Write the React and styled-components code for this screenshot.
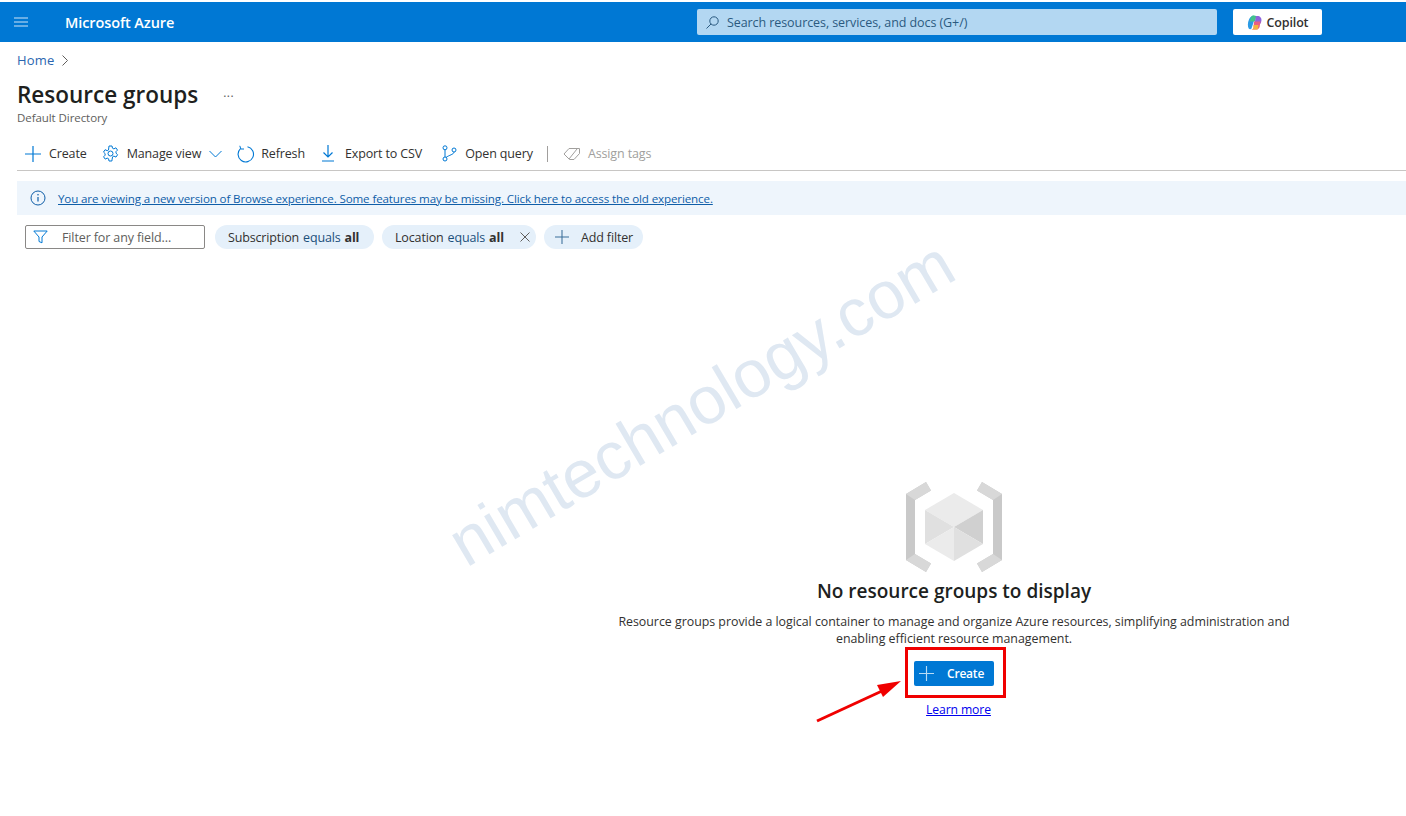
import styled, { createGlobalStyle } from "styled-components";

const GlobalStyle = createGlobalStyle`
  html, body { margin: 0; padding: 0; background: #fff; }
  body { font-family: "Open Sans", "Noto Sans", sans-serif; color: #323130; font-size: 12px; overflow: hidden; }
`;

const Page = styled.div`
  position: relative;
  width: 1406px;
  height: 816px;
  overflow: hidden;
  padding-top: 2px;
  box-sizing: border-box;
`;

const TopBar = styled.header`
  display: flex;
  align-items: center;
  height: 40px;
  background: #0078d4;
  color: #fff;
`;

const MenuButton = styled.div`
  display: flex;
  width: 14px;
  margin-left: 14px;
  color: #cfe4f6;
`;

const Brand = styled.div`
  margin-left: 37px;
  width: 632px;
  font-size: 14.5px;
  font-weight: 600;
  letter-spacing: -0.1px;
`;

const SearchBox = styled.div`
  display: flex;
  align-items: center;
  gap: 8px;
  width: 520px;
  height: 26px;
  padding-left: 9px;
  box-sizing: border-box;
  background: #b3d7f2;
  border-radius: 2px;
  color: #2b5a80;
  font-size: 12.5px;
  letter-spacing: -0.08px;
`;

const CopilotButton = styled.div`
  display: flex;
  align-items: center;
  justify-content: center;
  gap: 5px;
  width: 89px;
  height: 26px;
  margin-left: 16px;
  background: #fff;
  border-radius: 2px;
  color: #323130;
  font-size: 12.5px;
  font-weight: 600;
  letter-spacing: -0.15px;
`;

const Content = styled.main`
  padding-left: 17px;
`;

const Breadcrumb = styled.nav`
  display: flex;
  align-items: center;
  gap: 7px;
  height: 18px;
  margin-top: 9px;
  color: #2a66b0;
  font-size: 13px;
  letter-spacing: 0.2px;
`;

const TitleRow = styled.div`
  display: flex;
  align-items: center;
  height: 32px;
  margin-top: 9px;
`;

const Title = styled.h1`
  margin: 0;
  font-size: 22.5px;
  font-weight: 600;
  letter-spacing: 0;
  color: #201f1e;
`;

const Ellipsis = styled.span`
  margin-left: 25px;
  margin-top: -4px;
  color: #605e5c;
  font-size: 12px;
  letter-spacing: 0.5px;
`;

const Subtitle = styled.div`
  height: 16px;
  line-height: 16px;
  font-size: 11.5px;
  letter-spacing: -0.07px;
  color: #605e5c;
`;

const Toolbar = styled.div`
  display: flex;
  align-items: center;
  height: 33px;
  margin-top: 9px;
  padding: 2px 0 0 8px;
  border-bottom: 1px solid #c8c6c4;
`;

const ToolItem = styled.div`
  display: flex;
  align-items: center;
  gap: ${(p) => p.$gap || 8}px;
  margin-right: ${(p) => p.$after || 16}px;
  color: ${(p) => (p.$disabled ? "#a19f9d" : "#323130")};
  font-size: 12.5px;
  letter-spacing: -0.13px;
  white-space: nowrap;
`;

const ToolDivider = styled.div`
  width: 1px;
  height: 16px;
  margin-right: 15px;
  background: #a19f9d;
`;

const Banner = styled.div`
  display: flex;
  align-items: center;
  gap: 12px;
  height: 34px;
  margin-top: 10px;
  padding-left: 13px;
  background: #eef5fc;
`;

const BannerLink = styled.a`
  color: #0f5ea8;
  font-size: 11.6px;
  letter-spacing: -0.13px;
  text-decoration: underline;
  white-space: nowrap;
`;

const FilterRow = styled.div`
  display: flex;
  align-items: center;
  gap: 8px;
  height: 24px;
  margin-top: 10px;
  padding-left: 8px;
`;

const FilterInput = styled.div`
  display: flex;
  align-items: center;
  gap: 14px;
  width: 180px;
  height: 24px;
  margin-right: 2px;
  padding-left: 7px;
  box-sizing: border-box;
  border: 1px solid #8a8886;
  border-radius: 2px;
  color: #605e5c;
  font-size: 12.5px;
  letter-spacing: -0.12px;
`;

const Pill = styled.div`
  display: flex;
  align-items: center;
  gap: ${(p) => p.$gap || 0}px;
  width: ${(p) => p.$width}px;
  height: 24px;
  padding-left: ${(p) => p.$pad || 13}px;
  box-sizing: border-box;
  background: #e5f0fa;
  border-radius: 12px;
  color: #323130;
  font-size: 12.5px;
  letter-spacing: -0.15px;
  white-space: nowrap;
  b { font-weight: 700; margin-left: 4px; }
  em { font-style: normal; color: #1b4f7a; margin-left: 4px; }
`;

const EmptyState = styled.section`
  display: flex;
  flex-direction: column;
  align-items: center;
  width: 680px;
  margin-top: 233px;
  margin-left: 597px;
`;

const EmptyTitle = styled.h2`
  margin: 6px 0 0;
  font-size: 19px;
  line-height: 26px;
  font-weight: 600;
  letter-spacing: 0;
  color: #201f1e;
`;

const EmptyText = styled.p`
  margin: 9px 0 0;
  text-align: center;
  font-size: 12.4px;
  line-height: 17px;
  letter-spacing: -0.02px;
  color: #323130;
`;

const CreateButton = styled.div`
  display: flex;
  align-items: center;
  gap: 13px;
  width: 80px;
  height: 25px;
  margin-top: 14px;
  padding-left: 5px;
  box-sizing: border-box;
  background: #0078d4;
  border-radius: 2px;
  color: #fff;
  font-size: 12px;
  font-weight: 600;
  letter-spacing: -0.2px;
`;

const HighlightBox = styled.div`
  position: absolute;
  left: 905px;
  top: 647px;
  width: 101px;
  height: 51px;
  box-sizing: border-box;
  border: 3px solid #f00000;
`;

const LearnMore = styled.a`
  margin-top: 15px;
  margin-left: 9px;
  color: #0000ee;
  font-size: 12.2px;
  line-height: 17px;
  letter-spacing: -0.12px;
  text-decoration: underline;
`;

const Arrow = styled.svg`
  position: absolute;
  left: 810px;
  top: 675px;
`;

const Watermark = styled.div`
  position: absolute;
  left: 415px;
  top: 364px;
  transform: rotate(-30.5deg);
  font-family: "Liberation Sans", Arial, sans-serif;
  font-size: 67px;
  line-height: 78px;
  color: #dfe8f2;
  white-space: nowrap;
  pointer-events: none;
`;

const line = { fill: "none", stroke: "currentColor", strokeWidth: 1 };

const Plus = ({ size = 16, color = "#0078d4" }) => (
  <svg width={size} height={size} viewBox="0 0 16 16" style={{ color, flexShrink: 0 }}>
    <path d="M8 0v16M0 8h16" {...line} strokeWidth="1.2" />
  </svg>
);

const Gear = () => (
  <svg width="17" height="17" viewBox="0 0 17 17" style={{ color: "#0078d4" }}>
    <path
      d="M7 1h3l.5 2.2 1.400.7 2-1.100 1.600 2.300-1.500 1.500v1.600l1.600 1.500-1.600 2.400-2.100-1-1.300.7L10 14.900l-.1 1.100H7l-.4-2.200-1.400-.7-2 1-1.600-2.300 1.500-1.600V8.600l-1.600-1.500 1.600-2.400 2.100 1 1.300-.7z"
      {...line}
    />
    <circle cx="8.500" cy="8.500" r="2.500" {...line} />
  </svg>
);

const Chevron = () => (
  <svg width="13" height="8" viewBox="0 0 13 8" style={{ color: "#0078d4" }}>
    <path d="M.5 1l6 6 6-6" {...line} />
  </svg>
);

const RefreshIcon = () => (
  <svg width="18" height="18" viewBox="0 0 18 18" style={{ color: "#0078d4" }}>
    <path d="M10.500 1.700A7.700 7.700 0 1 1 3.500 3.600" {...line} strokeWidth="1.100" />
    <path d="M2.800 .8l1 3.200h3.200" {...line} strokeWidth="1" />
  </svg>
);

const Download = () => (
  <svg width="14" height="17" viewBox="0 0 14 17" style={{ color: "#0078d4" }}>
    <path d="M7 0v12M2.500 7.500L7 12l4.500-4.500M1 16h12" {...line} strokeWidth="1.200" />
  </svg>
);

const QueryIcon = () => (
  <svg width="15" height="17" viewBox="0 0 15 17" style={{ color: "#0078d4" }}>
    <circle cx="3" cy="2.800" r="2" {...line} />
    <circle cx="3" cy="14" r="2" {...line} />
    <circle cx="12" cy="5" r="2" {...line} />
    <path d="M3 4.800V12M12 7c0 2.500-5 3-8 5.500" {...line} />
  </svg>
);

const TagIcon = () => (
  <svg width="18" height="14" viewBox="0 0 18 14" style={{ color: "#a19f9d" }}>
    <path d="M1 7l5-5.500h10.500v5L11 12.500H6.500z" {...line} />
    <path d="M6 12l8-10" {...line} />
  </svg>
);

const InfoIcon = () => (
  <svg width="16" height="16" viewBox="0 0 16 16" style={{ color: "#0f5ea8" }}>
    <circle cx="8" cy="8" r="7" {...line} />
    <path d="M8 7v4.500" {...line} strokeWidth="1.200" />
    <circle cx="8" cy="4.800" r=".8" fill="currentColor" />
  </svg>
);

const FunnelIcon = () => (
  <svg width="15" height="14" viewBox="0 0 15 14" style={{ color: "#0078d4" }}>
    <path d="M.8 1h13.400L9 7v5.800L6 11.500V7z" {...line} />
  </svg>
);

const CloseIcon = () => (
  <svg width="10" height="10" viewBox="0 0 10 10" style={{ color: "#605e5c", marginLeft: 16 }}>
    <path d="M.5 .5l9 9M9.500 .5l-9 9" {...line} />
  </svg>
);

const SearchGlyph = () => (
  <svg width="13" height="13" viewBox="0 0 13 13" style={{ color: "#2b5a80" }}>
    <circle cx="8" cy="5" r="4.200" {...line} />
    <path d="M5 8l-4.500 4.500" {...line} />
  </svg>
);

const CopilotLogo = () => (
  <svg width="15" height="15" viewBox="0 0 15 15">
    <path d="M5 1c1.300-.6 2.800-.3 3 .8L6 9l-1.500 4.500c-.5 1-2 1-2.800 0C.6 11.500.5 8 2 4.500 2.600 3 3.600 1.700 5 1z" fill="#2b9be6" />
    <path d="M5 1c1.500-.7 3.500-.4 4.500.3L8 6.500H2.800C3.300 4 3.800 1.700 5 1z" fill="#43c38a" />
    <path d="M9 1h2.500c1.700.4 3 2 3 4l-.7 3.500H7.500z" fill="#8d64dc" />
    <path d="M7 6.500h6.500L12.600 12c-.5 1.500-1.700 2.400-3 2.400H4.500c1 0 1.700-.7 2-1.700z" fill="#ea5f80" />
    <path d="M6.500 10h5l-.7 4.400H4.500c1 0 1.700-.7 2-1.700z" fill="#f6b23c" />
  </svg>
);

const ResourceGroupIcon = () => (
  <svg width="96" height="90" viewBox="0 0 96 90">
    <path d="M0 12L20 0l5 8.500L9 18v54l16 9.500L20 90 0 78z" fill="#c9c9c9" />
    <path d="M96 12L76 0l-5 8.500L87 18v54L71 81.500 76 90l20-12z" fill="#c9c9c9" />
    <path d="M0 12l9 6 16-9.500L20 0z" fill="#d8d8d8" />
    <path d="M96 12l-9 6-16-9.500L76 0z" fill="#d8d8d8" />
    <path d="M0 78l9-6 16 9.500L20 90z" fill="#d8d8d8" />
    <path d="M96 78l-9-6-16 9.500L76 90z" fill="#d8d8d8" />
    <path d="M48 11l29 17-29 17-29-17z" fill="#ebebeb" />
    <path d="M19 28l29 17-29 17z" fill="#e0e0e0" />
    <path d="M77 28L48 45l29 17z" fill="#d0d0d0" />
    <path d="M19 62l29-17v34z" fill="#ebebeb" />
    <path d="M77 62L48 45v34z" fill="#e0e0e0" />
  </svg>
);

export default function App() {
  return (
    <Page>
      <GlobalStyle />
      <TopBar>
        <MenuButton>
          <svg width="14" height="10" viewBox="0 0 14 10">
            <path d="M0 1h14M0 5h14M0 9h14" stroke="currentColor" strokeWidth="1.200" />
          </svg>
        </MenuButton>
        <Brand>Microsoft Azure</Brand>
        <SearchBox>
          <SearchGlyph />
          Search resources, services, and docs (G+/)
        </SearchBox>
        <CopilotButton>
          <CopilotLogo />
          Copilot
        </CopilotButton>
      </TopBar>

      <Content>
        <Breadcrumb>
          Home
          <svg width="6" height="11" viewBox="0 0 6 11" style={{ color: "#605e5c" }}>
            <path d="M.5 .5l5 5-5 5" {...line} />
          </svg>
        </Breadcrumb>
        <TitleRow>
          <Title>Resource groups</Title>
          <Ellipsis>...</Ellipsis>
        </TitleRow>
        <Subtitle>Default Directory</Subtitle>

        <Toolbar>
          <ToolItem $after={15}><Plus />Create</ToolItem>
          <ToolItem $after={15}><Gear />Manage view<Chevron /></ToolItem>
          <ToolItem $after={16} $gap={6}><RefreshIcon />Refresh</ToolItem>
          <ToolItem $after={20} $gap={10}><Download />Export to CSV</ToolItem>
          <ToolItem $after={14} $gap={8}><QueryIcon />Open query</ToolItem>
          <ToolDivider />
          <ToolItem $disabled $gap={7}><TagIcon />Assign tags</ToolItem>
        </Toolbar>

        <Banner>
          <InfoIcon />
          <BannerLink>
            You are viewing a new version of Browse experience. Some features may be missing. Click here to access the old experience.
          </BannerLink>
        </Banner>

        <FilterRow>
          <FilterInput><FunnelIcon />Filter for any field...</FilterInput>
          <Pill $width={159}>Subscription<em>equals</em><b>all</b></Pill>
          <Pill $width={154}>Location<em>equals</em><b>all</b><CloseIcon /></Pill>
          <Pill $width={99} $pad={11} $gap={12}><Plus size={14} color="#3b6f99" />Add filter</Pill>
        </FilterRow>

        <EmptyState>
          <ResourceGroupIcon />
          <EmptyTitle>No resource groups to display</EmptyTitle>
          <EmptyText>
            Resource groups provide a logical container to manage and organize Azure resources, simplifying administration and
            <br />
            enabling efficient resource management.
          </EmptyText>
          <CreateButton><Plus size={15} color="#b8dcf5" />Create</CreateButton>
          <LearnMore>Learn more</LearnMore>
        </EmptyState>
      </Content>

      <Watermark>nimtechnology.com</Watermark>
      <HighlightBox />
      <Arrow width="95" height="50" viewBox="0 0 95 50">
        <path d="M7 46L72 16" stroke="#f00000" strokeWidth="3" fill="none" />
        <path d="M91 6L67 10l6 12z" fill="#f00000" />
      </Arrow>
    </Page>
  );
}
